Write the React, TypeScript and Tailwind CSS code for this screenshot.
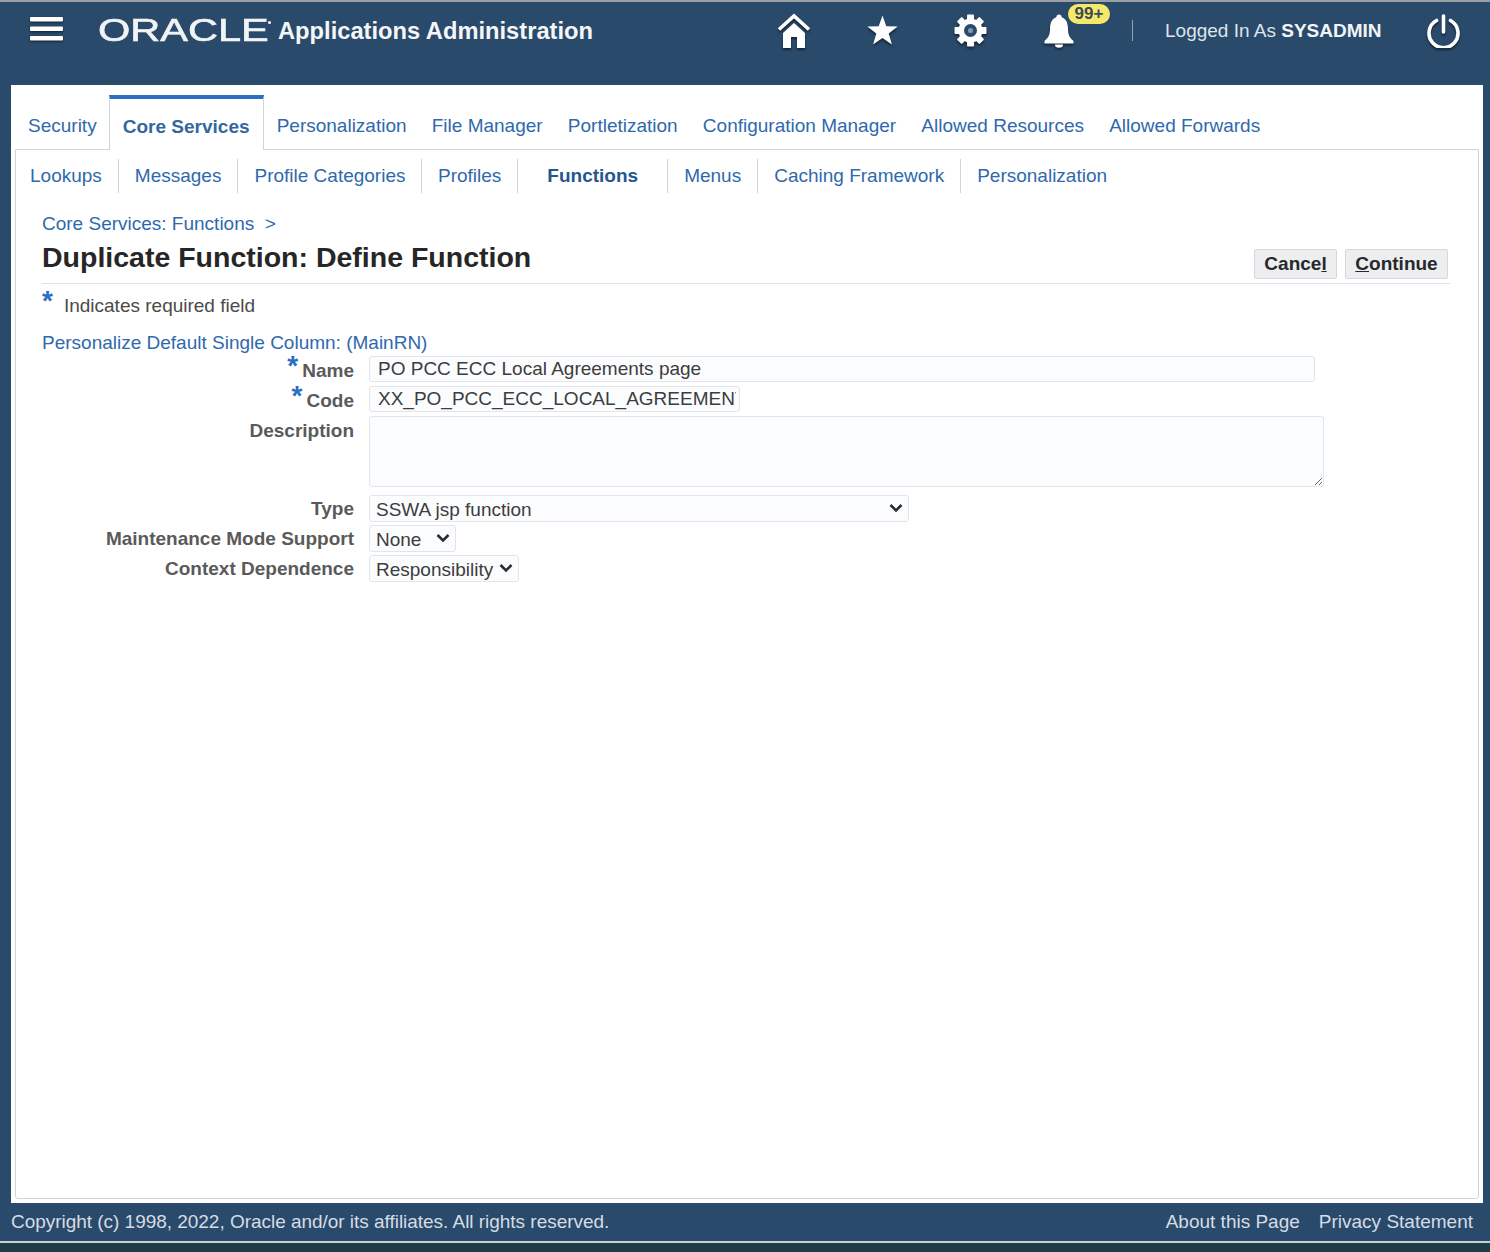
import React from "react";

const font = { fontFamily: '"Liberation Sans", Arial, sans-serif' };
const main = ["Security", "Core Services", "Personalization", "File Manager", "Portletization", "Configuration Manager", "Allowed Resources", "Allowed Forwards"];
const subs = ["Lookups", "Messages", "Profile Categories", "Profiles", "Functions", "Menus", "Caching Framework", "Personalization"];

function Star({ className = "" }: { className?: string }) {
  return <span className={`text-[#2a6fc4] font-bold text-[28px] leading-[20px] h-[16px] ${className}`}>*</span>;
}

function Label({ text, req, low }: { text: string; req?: boolean; low?: boolean }) {
  return (
    <div className={`flex justify-end items-start text-[#5a5a5a] font-bold text-[19px] h-[26px] ${low ? "leading-[30px]" : "leading-[28px]"}`}>
      {req && <Star className="mr-[4px]" />}
      <span>{text}</span>
    </div>
  );
}

const field = "border border-[#e2e6ec] bg-[#fbfcfd] rounded-[3px] text-[19px] text-[#3d3d3d] outline-none";

function Select({ value, w }: { value: string; w: string }) {
  return (
    <div className={`relative h-[27px] mb-[3px] ${w}`}>
      <select className={`${field} appearance-none w-full h-full pl-[6px] pb-[1px]`}><option>{value}</option></select>
      <svg width="14" height="10" viewBox="0 0 14 10" fill="none" stroke="#2c2c2c" strokeWidth="2.6" className="absolute right-[6px] top-[8px] pointer-events-none">
        <path d="M1.5 2 7 7.5 12.5 2" />
      </svg>
    </div>
  );
}

function Gear() {
  const teeth = [0, 45, 90, 135, 180, 225, 270, 315];
  return (
    <svg width="33" height="33" viewBox="0 0 33 33" className="ml-[56px]">
      {teeth.map((a) => (
        <rect key={a} x="13" y="0.5" width="7" height="7" rx="1" fill="#fff" transform={`rotate(${a} 16.5 16.5)`} />
      ))}
      <circle cx="16.5" cy="16.5" r="12" fill="#fff" />
      <circle cx="16.5" cy="16.5" r="6.5" fill="#2a4a6b" />
      <circle cx="16.5" cy="16.5" r="2.6" fill="#8395ab" />
    </svg>
  );
}

export default function App() {
  return (
    <div style={font} className="w-[1490px] h-[1252px] flex flex-col bg-[#1f3f48] overflow-hidden">
      <div className="h-[2px] bg-[#9aa0a3]" />
      <div className="flex-1 flex flex-col bg-[#2a4a6b]">
        <header className="h-[83px] flex items-start text-white">
          <svg width="36" height="28" viewBox="0 0 36 28" className="ml-[29px] mt-[14px] shrink-0 drop-shadow-[0_1px_1px_rgba(0,0,0,0.6)]">
            <rect x="1" y="1" width="33" height="4.5" rx="1" fill="#fff" />
            <rect x="1" y="10.5" width="33" height="4.5" rx="1" fill="#fff" />
            <rect x="1" y="20" width="33" height="4.5" rx="1" fill="#fff" />
          </svg>
          <div className="ml-[33px] mt-[12px] w-[176px] h-[34px] shrink-0 relative">
            <span className="block origin-left scale-x-[1.34] whitespace-nowrap text-[31px] leading-[34px] text-[#f1f3f5] [-webkit-text-stroke:0.6px_#f1f3f5]">ORACLE</span>
            <span className="absolute left-[170px] top-[7px] w-[3px] h-[3px] rounded-full bg-white" />
          </div>
          <div className="ml-[4px] mt-[13px] w-[315px] text-[23.7px] leading-[32px] font-bold text-[#f4f6f8] whitespace-nowrap">Applications Administration</div>
          <div className="ml-[184px] mt-[11px] flex items-center text-white [&>svg]:drop-shadow-[0_2px_1px_rgba(0,0,0,0.5)] [&>div>svg]:drop-shadow-[0_2px_1px_rgba(0,0,0,0.5)]">
            <svg width="34" height="35" viewBox="0 0 34 35">
              <path d="M2 16.5 17 3l15 13.5" fill="none" stroke="#fff" strokeWidth="3.6" />
              <path fill="#fff" d="M17 10 28 20v15h-8V24h-6v11H6V20z" />
            </svg>
            <svg width="31" height="31" viewBox="0 0 31 31" className="ml-[56px]">
              <polygon fill="#fff" points="15.5,0.5 19.3,11.2 30.7,11.6 21.7,18.5 24.9,29.4 15.5,23 6.1,29.4 9.3,18.5 0.3,11.6 11.7,11.2" />
            </svg>
            <Gear />
            <div className="relative ml-[57px]">
              <svg width="30" height="34" viewBox="0 0 30 34" className="block">
                <circle cx="15" cy="3" r="2.6" fill="#fff" />
                <path fill="#fff" d="M15 3C8 3 6 9 6 15c0 6-2 9-5.500 12v2.500h29V27C26 24 24 21 24 15 24 9 22 3 15 3z" />
                <path fill="#fff" d="M11 30.500a4 3.200 0 0 0 8 0z" />
              </svg>
              <span className="absolute left-[24px] top-[-10px] w-[42px] h-[20px] rounded-full bg-[#f5e96a] text-[#3d4a55] text-[17px] leading-[20px] font-bold text-center">99+</span>
            </div>
            <div className="ml-[58px] w-px h-[21px] bg-[#8fa3b8]" />
            <div className="ml-[32px] text-[19px] leading-[32px] text-[#dfe5ec] whitespace-nowrap">
              Logged In As <span className="font-bold text-[#f2f4f7]">SYSADMIN</span>
            </div>
            <svg width="33" height="34" viewBox="0 0 33 34" fill="none" stroke="#fff" strokeWidth="3.6" strokeLinecap="round" className="ml-[45px]">
              <path d="M16.500 2v16" />
              <path d="M9.500 6.500a14.500 14.500 0 1 0 14 0" />
            </svg>
          </div>
        </header>

        <main className="flex-1 mx-[11px] mr-[7px] bg-white flex flex-col px-[4px] pb-[4px]">
          <nav className="h-[64px] flex items-end text-[19px] text-[#2f69ad] pl-[13px]">
            {main.map((t) =>
              t === "Core Services" ? (
                <div key={t} className="relative z-10 w-[155px] text-center h-[55px] mb-[-1px] mr-[13px] bg-white border-x border-[#ccd6e0] border-t-[4px] border-t-[#2a6fc4] font-bold text-[#35679f] leading-[56px]">{t}</div>
              ) : (
                <div key={t} className={`leading-[42px] h-[44px] whitespace-nowrap ${t === "Security" ? "mr-[12px]" : "mr-[25.2px]"}`}>{t}</div>
              )
            )}
          </nav>
          <section className="flex-1 border border-[#ccd6e0] rounded-b-[3px] flex flex-col min-h-0">
            <div className="flex items-center h-[52px] pl-[14px] text-[19px] text-[#2f69ad]">
              {subs.map((t, i) => (
                <div key={t + i} className={`h-[34px] leading-[34px] whitespace-nowrap ${i < subs.length - 1 ? "border-r border-[#ccd6e0]" : ""} ${t === "Functions" ? "px-[29px] font-bold text-[#24568f]" : i === 0 ? "pr-[16px]" : i === 2 ? "pl-[16px] pr-[15.5px]" : "px-[16px]"}`}>{t}</div>
              ))}
            </div>
            <div className="pl-[26px] pr-[28px] flex flex-col">
              <div className="mt-[9px] text-[19px] leading-[26px] text-[#2f69ad]">Core Services: Functions&nbsp; &gt;</div>
              <div className="flex items-end justify-between border-b border-[#dfe3e9] h-[47px]">
                <h1 className="text-[28.500px] leading-[36px] mb-[8px] font-bold text-[#262626]">Duplicate Function: Define Function</h1>
                <div className="flex gap-[8px] mr-[2px] mb-[4px]">
                  <button className="w-[83px] h-[30px] bg-[#eceef0] border border-[#d4d8dc] rounded-[2px] text-[19px] font-bold text-[#26282b] leading-[28px]">Cance<u>l</u></button>
                  <button className="w-[103px] h-[30px] bg-[#eceef0] border border-[#d4d8dc] rounded-[2px] text-[19px] font-bold text-[#26282b] leading-[28px]"><u>C</u>ontinue</button>
                </div>
              </div>
              <div className="flex items-start mt-[7px] h-[30px]">
                <Star />
                <span className="ml-[11px] text-[19px] leading-[30px] text-[#4a4a4a]">Indicates required field</span>
              </div>
              <div className="mt-[9px] text-[19px] leading-[26px] text-[#2f69ad]">Personalize Default Single Column: (MainRN)</div>
              <div className="grid grid-cols-[312px_1fr] gap-x-[15px]">
                <Label text="Name" req low />
                <input readOnly value="PO PCC ECC Local Agreements page" className={`${field} w-[946px] h-[26px] pl-[8px] pr-[3px] mb-[4px]`} />
                <Label text="Code" req low />
                <input readOnly value="XX_PO_PCC_ECC_LOCAL_AGREEMENTS" className={`${field} w-[371px] h-[26px] pl-[8px] pr-[3px] mb-[4px]`} />
                <Label text="Description" low />
                <textarea readOnly className={`${field} w-[955px] h-[71px] block mb-[8px]`} />
                <Label text="Type" />
                <Select value="SSWA jsp function" w="w-[540px]" />
                <Label text="Maintenance Mode Support" />
                <Select value="None" w="w-[87px]" />
                <Label text="Context Dependence" />
                <Select value="Responsibility" w="w-[150px]" />
              </div>
            </div>
          </section>
        </main>

        <footer className="h-[38px] flex items-center justify-between pl-[11px] pr-[17px] text-[19px] text-[#d5dce4]">
          <span className="tracking-[-0.03px]">Copyright (c) 1998, 2022, Oracle and/or its affiliates. All rights reserved.</span>
          <span className="flex gap-[19px]"><span>About this Page</span><span>Privacy Statement</span></span>
        </footer>
      </div>
      <div className="h-[2px] bg-[#c9cfd3]" />
      <div className="h-[9px] bg-[#1e3d46]" />
    </div>
  );
}
